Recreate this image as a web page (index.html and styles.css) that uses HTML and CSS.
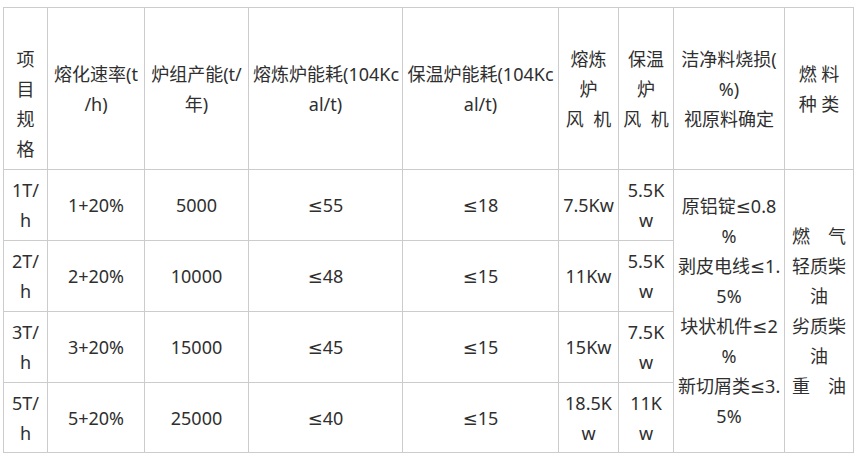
FILE: index.html
```html
<!DOCTYPE html>
<html lang="zh-CN">
<head>
<meta charset="utf-8">
<title>熔化炉参数表</title>
<link rel="stylesheet" href="styles.css">
</head>
<body>
<div class="page">
  <table class="spec">
    <colgroup>
      <col class="w-item">
      <col class="w-rate">
      <col class="w-cap">
      <col class="w-melt">
      <col class="w-hold">
      <col class="w-fan1">
      <col class="w-fan2">
      <col class="w-loss">
      <col class="w-fuel">
    </colgroup>
    <tbody>
      <tr class="head">
        <td class="item-head">项<br>目<br>规<br>格</td>
        <td>熔化速率(t<br>/h)</td>
        <td>炉组产能(t/<br>年)</td>
        <td>熔炼炉能耗(104Kc<br>al/t)</td>
        <td>保温炉能耗(104Kc<br>al/t)</td>
        <td>熔炼<br>炉<br>风&nbsp;&nbsp;机</td>
        <td>保温<br>炉<br>风&nbsp;&nbsp;机</td>
        <td>洁净料烧损(<br>%)<br>视原料确定</td>
        <td>燃 料<br>种 类</td>
      </tr>
      <tr class="row">
        <td>1T/<br>h</td>
        <td>1+20%</td>
        <td>5000</td>
        <td>≤55</td>
        <td>≤18</td>
        <td>7.5Kw</td>
        <td>5.5K<br>w</td>
        <td rowspan="4">原铝锭≤0.8<br>%<br>剥皮电线≤1.<br>5%<br>块状机件≤2<br>%<br>新切屑类≤3.<br>5%</td>
        <td rowspan="4">燃　气<br>轻质柴<br>油<br>劣质柴<br>油<br>重　油</td>
      </tr>
      <tr class="row">
        <td>2T/<br>h</td>
        <td>2+20%</td>
        <td>10000</td>
        <td>≤48</td>
        <td>≤15</td>
        <td>11Kw</td>
        <td>5.5K<br>w</td>
      </tr>
      <tr class="row">
        <td>3T/<br>h</td>
        <td>3+20%</td>
        <td>15000</td>
        <td>≤45</td>
        <td>≤15</td>
        <td>15Kw</td>
        <td>7.5K<br>w</td>
      </tr>
      <tr class="row last">
        <td>5T/<br>h</td>
        <td>5+20%</td>
        <td>25000</td>
        <td>≤40</td>
        <td>≤15</td>
        <td>18.5K<br>w</td>
        <td>11K<br>w</td>
      </tr>
    </tbody>
  </table>
</div>
</body>
</html>
```

FILE: styles.css
```css
html, body {
  margin: 0;
  padding: 0;
  background: #ffffff;
}

.page {
  padding: 7px 0 0 3px;
}

.spec {
  border-collapse: collapse;
  table-layout: fixed;
  width: 851px;
  font-family: "Noto Sans", "DejaVu Sans", "Noto Sans CJK SC", sans-serif;
  font-size: 18px;
  line-height: 30px;
  color: #2f2f2f;
}

.spec td {
  border: 1px solid #cccccc;
  padding: 0 4px;
  text-align: center;
  vertical-align: middle;
  white-space: nowrap;
}

.w-item { width: 44px; }
.w-rate { width: 97px; }
.w-cap  { width: 104px; }
.w-melt { width: 154px; }
.w-hold { width: 156px; }
.w-fan1 { width: 60px; }
.w-fan2 { width: 55px; }
.w-loss { width: 111px; }
.w-fuel { width: 69px; }

.head { height: 162px; }
.row { height: 71px; }
.row.last { height: 70px; }

.spec td.item-head {
  padding-top: 30px;
}
```
